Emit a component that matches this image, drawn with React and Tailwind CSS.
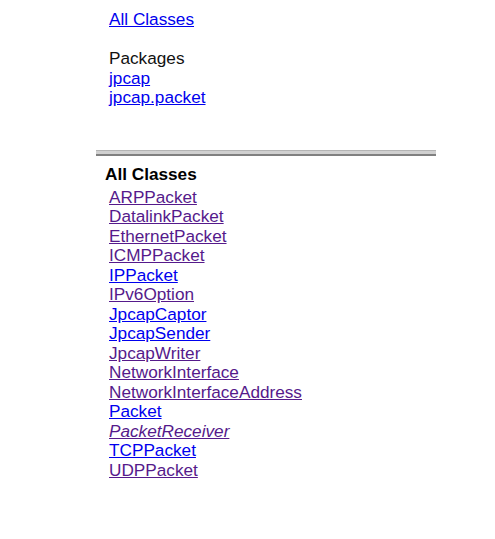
export default function App() {
  const classes = [
    ["ARPPacket", true],
    ["DatalinkPacket", true],
    ["EthernetPacket", true],
    ["ICMPPacket", true],
    ["IPPacket", false],
    ["IPv6Option", true],
    ["JpcapCaptor", false],
    ["JpcapSender", false],
    ["JpcapWriter", true],
    ["NetworkInterface", true],
    ["NetworkInterfaceAddress", true],
    ["Packet", false],
    ["PacketReceiver", true, true],
    ["TCPPacket", false],
    ["UDPPacket", true],
  ];
  return (
    <div className="w-[495px] h-[539px] bg-white font-['Liberation_Sans',Arial,sans-serif] text-[17.2px] leading-[19.5px] text-[#111]">
      <div className="pl-[109px] pt-[10px] h-[150px]">
        <a href="#" className="text-[#0000EE] underline">All Classes</a>
        <div className="h-[19.5px]" />
        <div>Packages</div>
        <div><a href="#" className="text-[#0000EE] underline">jpcap</a></div>
        <div><a href="#" className="text-[#0000EE] underline">jpcap.packet</a></div>
      </div>
      <div className="ml-[96px] w-[340px]">
        <div className="h-[1px] bg-[#b4b4b4]" />
        <div className="h-[3px] bg-[#d0d0d0]" />
        <div className="h-[2px] bg-[#808080]" />
      </div>
      <div className="pt-[9px]">
        <div className="pl-[105px] font-bold text-black">All Classes</div>
        <div className="pl-[109px] pt-[3px] flex flex-col">
          {classes.map(([name, visited, italic]) => (
            <div key={name}>
              <a
                href="#"
                className={
                  (visited ? "text-[#551A8B]" : "text-[#0000EE]") +
                  (italic ? " italic" : "") +
                  " underline"
                }
              >
                {name}
              </a>
            </div>
          ))}
        </div>
      </div>
    </div>
  );
}
